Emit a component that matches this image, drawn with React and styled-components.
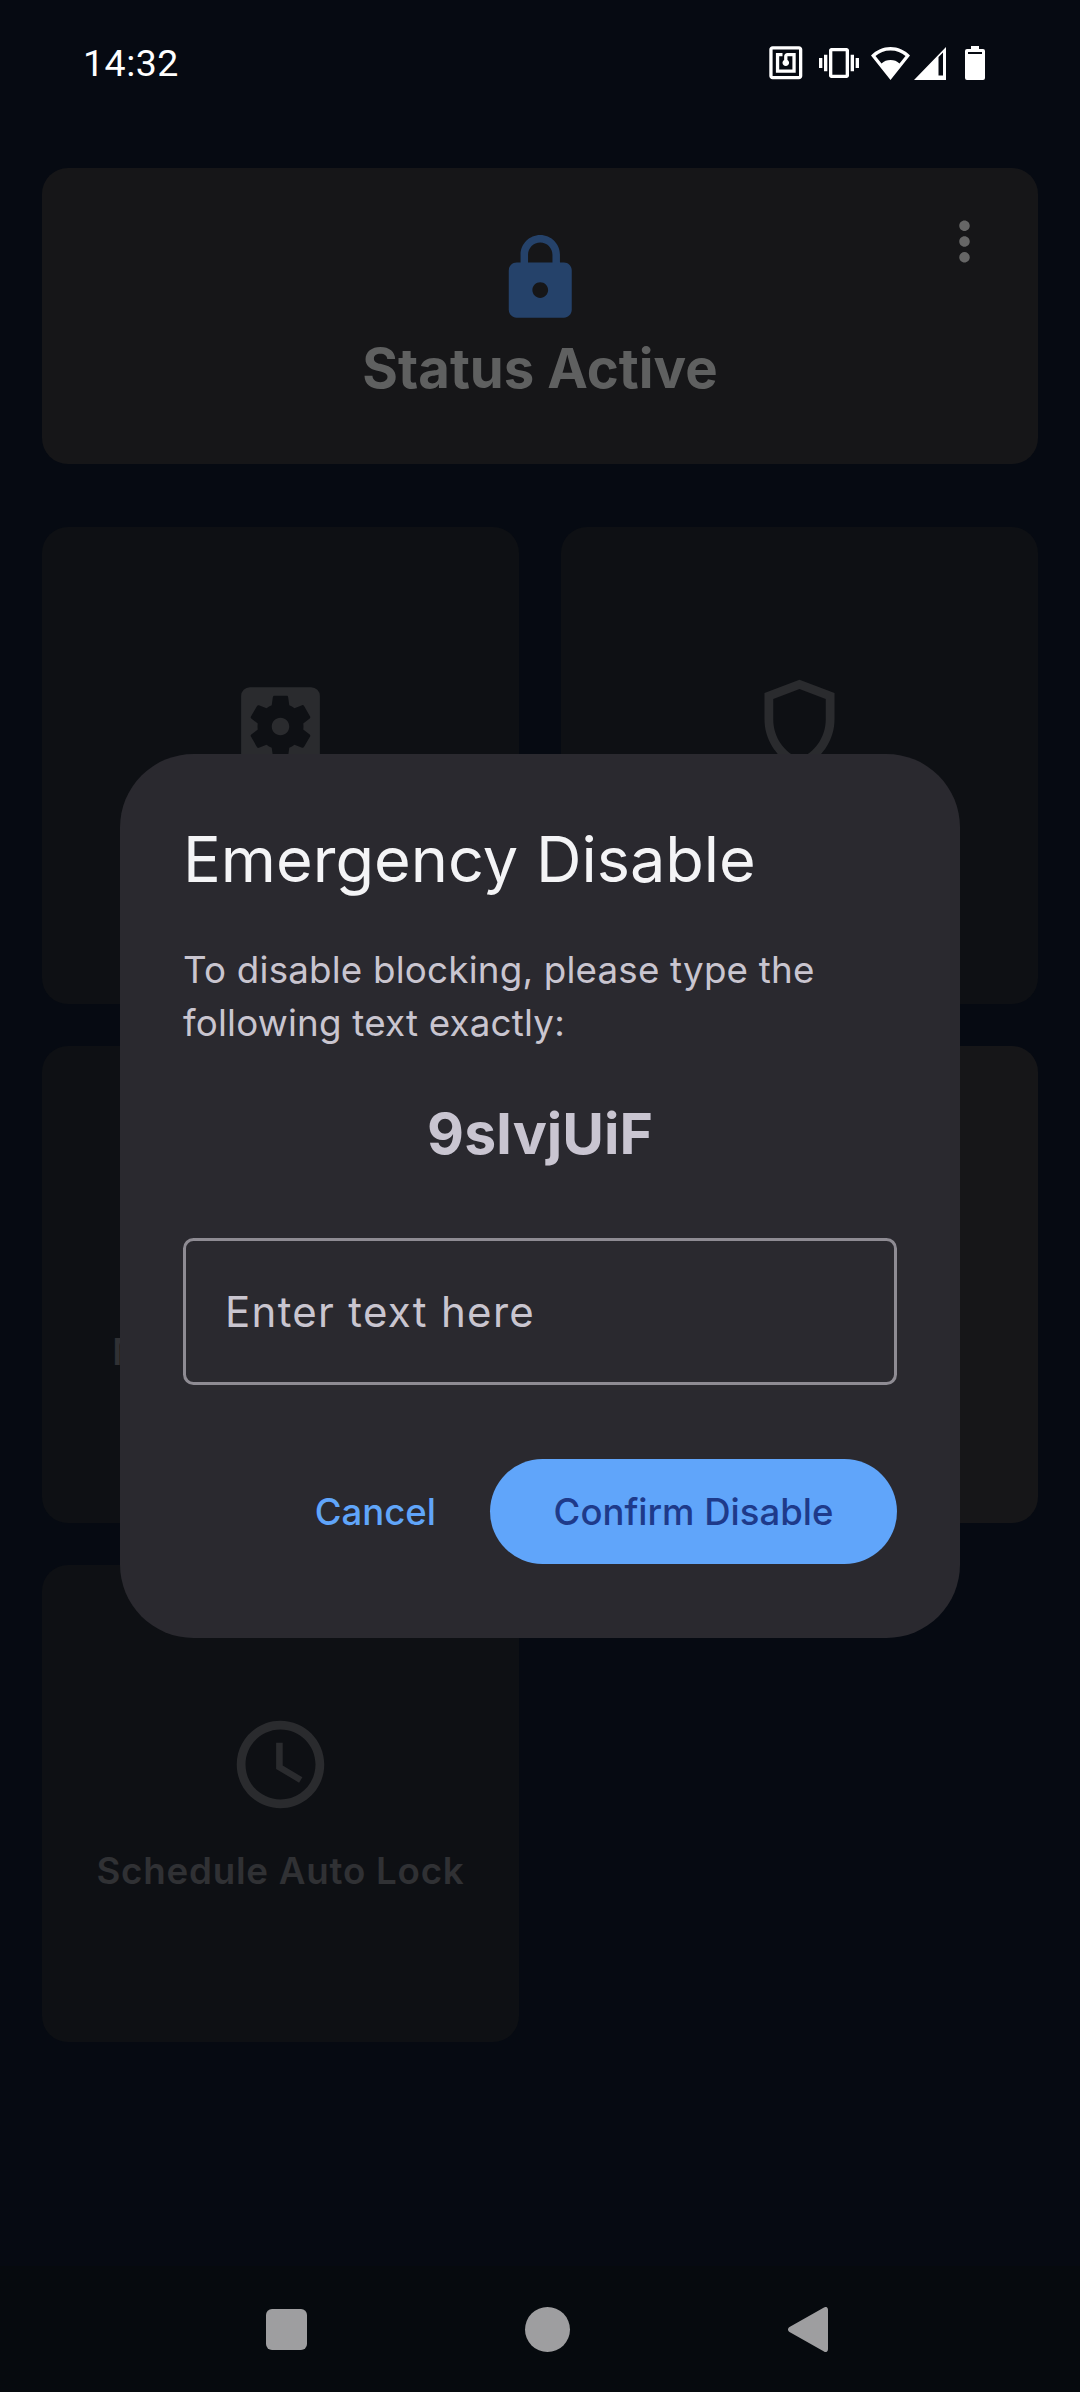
import React from 'react';
import styled, { createGlobalStyle } from 'styled-components';
import { MdLock, MdMoreVert, MdNfc, MdVibration, MdSettingsApplications, MdOutlineShield, MdOutlineAccessTime } from 'react-icons/md';

const GlobalStyle = createGlobalStyle`
  html, body {
    margin: 0;
    padding: 0;
    background: #060a12;
  }
  * {
    box-sizing: border-box;
  }
`;

const Screen = styled.div`
  position: relative;
  width: 1080px;
  height: 2392px;
  overflow: hidden;
  display: flex;
  flex-direction: column;
  background: #060a12;
  font-family: Inter, "Noto Sans", sans-serif;
`;

const StatusBar = styled.div`
  height: 126px;
  flex: none;
  display: flex;
  align-items: center;
  justify-content: space-between;
  padding: 0 95px 0 83px;
`;

const Clock = styled.span`
  font-family: Roboto, sans-serif;
  font-size: 37.5px;
  color: #fff;
  letter-spacing: 0.5px;
`;

const StatusIcons = styled.div`
  display: flex;
  align-items: center;
  color: #fff;

  svg {
    display: block;
    flex: none;
  }
`;

const IconSlot = styled.span`
  display: flex;
  margin-left: ${props => props.$gap || 0}px;
`;

const Content = styled.main`
  flex: 1;
  padding: 42px 42px 0;
  display: flex;
  flex-direction: column;
  gap: 63px;
`;

const StatusCard = styled.section`
  position: relative;
  height: 296px;
  border-radius: 26px;
  background: #161618;
  display: flex;
  flex-direction: column;
  align-items: center;
  padding-top: 63px;
`;

const StatusTitle = styled.h1`
  margin: 10px 0 0;
  font-size: 54.5px;
  line-height: 64px;
  font-weight: 700;
  color: #5f6060;
`;

const LockIcon = styled(MdLock)`
  display: block;
  color: #25426a;
`;

const MenuButton = styled.span`
  position: absolute;
  top: 42px;
  right: 42px;
  display: flex;
  color: #666;
`;

const Grid = styled.div`
  display: grid;
  grid-template-columns: repeat(2, 477px);
  grid-auto-rows: 477px;
  gap: 42px;
`;

const Tile = styled.div`
  border-radius: 26px;
  background: ${props => (props.$active ? '#161618' : '#0e1014')};
  display: flex;
  flex-direction: column;
  align-items: center;
  justify-content: center;
  gap: 28px;
  color: #2a2b2e;
`;

const TileIcon = styled.span`
  display: flex;
  height: 105px;
`;

const ShieldIcon = styled(MdOutlineShield)`
  transform: translateY(-3px);
`;

const TileLabel = styled.div`
  min-height: 51px;
  font-size: 36.75px;
  line-height: 51px;
  font-weight: 600;
  letter-spacing: 0.75px;
  color: #303134;
`;

const NavBar = styled.nav`
  height: 126px;
  flex: none;
  background: #060a0e;
  display: flex;
  align-items: center;
  padding-left: 266px;
  color: #9e9ea0;
`;

const NavSquare = styled.span`
  width: 41px;
  height: 41px;
  border-radius: 6px;
  background: currentColor;
`;

const NavCircle = styled.span`
  width: 45px;
  height: 45px;
  margin-left: 218px;
  border-radius: 50%;
  background: currentColor;
`;

const NavBack = styled.svg`
  width: 40px;
  height: 45px;
  margin-left: 218px;
  display: block;
`;

const Overlay = styled.div`
  position: absolute;
  inset: 0;
  display: flex;
  align-items: center;
  justify-content: center;
`;

const Dialog = styled.div`
  width: 840px;
  height: 884px;
  border-radius: 73.5px;
  background: #2a292f;
  padding: 63px;
  display: flex;
  flex-direction: column;
`;

const DialogTitle = styled.h2`
  margin: 0;
  font-size: 63px;
  line-height: 84px;
  font-weight: 400;
  color: #f4f4f6;
`;

const DialogBody = styled.p`
  margin: 43px 0 0;
  font-size: 36.75px;
  line-height: 52.5px;
  letter-spacing: 0.2px;
  color: #c9c5cf;
`;

const Code = styled.div`
  margin-top: 49px;
  text-align: center;
  font-size: 57px;
  line-height: 72px;
  font-weight: 700;
  color: #c9c5d1;
`;

const TextField = styled.input`
  margin-top: 68px;
  width: 100%;
  height: 147px;
  flex: none;
  padding: 0 39px;
  border: 3px solid #8e8b93;
  border-radius: 10.5px;
  background: transparent;
  outline: none;
  font-family: inherit;
  font-size: 42px;
  letter-spacing: 1.3px;
  color: #c9c5cf;

  &::placeholder {
    color: #c9c5cf;
    opacity: 1;
  }
`;

const Actions = styled.div`
  margin-top: 74px;
  display: flex;
  justify-content: flex-end;
  align-items: center;
`;

const TextButton = styled.button`
  height: 105px;
  padding: 0 54px 0 0;
  border: 0;
  background: none;
  font-family: inherit;
  font-size: 36.5px;
  font-weight: 500;
  color: #60a5fa;
`;

const FilledButton = styled(TextButton)`
  width: 407px;
  padding: 0;
  border-radius: 52.5px;
  background: #60a5fa;
  color: #1e3a8a;
`;

const WifiIcon = () => (
  <svg width="39" height="33" viewBox="0 0 39 33" fill="currentColor" fillRule="evenodd">
    <path d="M19.5 0C12 0 5.5 3 0 8.5L19.5 33 39 8.5C33.5 3 27 0 19.5 0ZM19.5 3.5C13.5 3.5 8.5 5.5 4.5 9L10.5 16.5C13 14 16 13 19.5 13 23 13 26 14 28.5 16.5L34.5 9C30.5 5.5 25.5 3.5 19.5 3.5Z" />
  </svg>
);

const SignalIcon = () => (
  <svg width="32" height="33" viewBox="0 0 32 33" fill="currentColor" fillRule="evenodd">
    <path d="M32 0V33H0ZM24.5 10V28.5H29V5.5Z" />
  </svg>
);

const BatteryIcon = () => (
  <svg width="20" height="34" viewBox="0 0 20 34" fill="currentColor" fillRule="evenodd">
    <path d="M6 0H14V3H18A2 2 0 0 1 20 5V32A2 2 0 0 1 18 34H2A2 2 0 0 1 0 32V5A2 2 0 0 1 2 3H6ZM3 6V8H17V6Z" />
  </svg>
);

export default function App() {
  return (
    <Screen>
      <GlobalStyle />
      <StatusBar>
        <Clock>14:32</Clock>
        <StatusIcons>
          <MdNfc size={39.6} />
          <IconSlot $gap={13}><MdVibration size={40} /></IconSlot>
          <IconSlot $gap={12}><WifiIcon /></IconSlot>
          <IconSlot $gap={4}><SignalIcon /></IconSlot>
          <IconSlot $gap={19}><BatteryIcon /></IconSlot>
        </StatusIcons>
      </StatusBar>

      <Content>
        <StatusCard>
          <LockIcon size={94.5} />
          <StatusTitle>Status Active</StatusTitle>
          <MenuButton><MdMoreVert size={63} /></MenuButton>
        </StatusCard>

        <Grid>
          <Tile>
            <TileIcon><MdSettingsApplications size={105} /></TileIcon>
            <TileLabel />
          </Tile>
          <Tile>
            <TileIcon><ShieldIcon size={105} /></TileIcon>
            <TileLabel />
          </Tile>
          <Tile>
            <TileIcon />
            <TileLabel>Manage Block List</TileLabel>
          </Tile>
          <Tile $active />
          <Tile>
            <TileIcon><MdOutlineAccessTime size={105} /></TileIcon>
            <TileLabel>Schedule Auto Lock</TileLabel>
          </Tile>
        </Grid>
      </Content>

      <NavBar>
        <NavSquare />
        <NavCircle />
        <NavBack viewBox="0 0 40 45" fill="currentColor">
          <path d="M36 .6C38 -.8 40 .2 40 3V42C40 44.8 38 45.8 36 44.4L1.5 25C-.5 23.7 -.5 21.3 1.5 20Z" />
        </NavBack>
      </NavBar>

      <Overlay>
        <Dialog>
          <DialogTitle>Emergency Disable</DialogTitle>
          <DialogBody>To disable blocking, please type the following text exactly:</DialogBody>
          <Code>9sIvjUiF</Code>
          <TextField placeholder="Enter text here" readOnly />
          <Actions>
            <TextButton>Cancel</TextButton>
            <FilledButton>Confirm Disable</FilledButton>
          </Actions>
        </Dialog>
      </Overlay>
    </Screen>
  );
}
